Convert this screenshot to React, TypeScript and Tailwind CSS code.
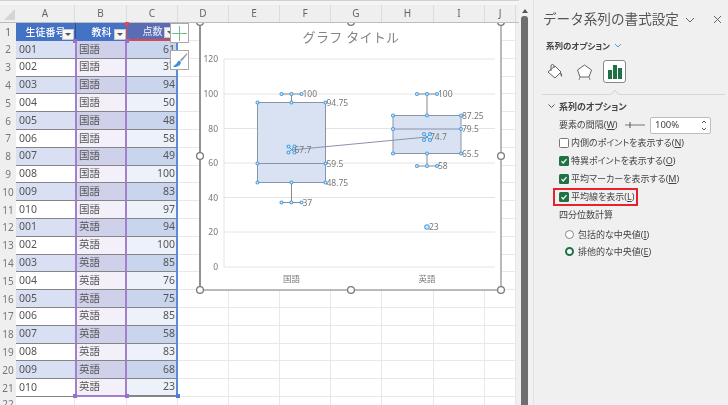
import React from "react";

const FONT = "font-['Noto_Sans','Noto_Sans_CJK_JP',sans-serif]";
const letters = ["A", "B", "C", "D", "E", "F", "G", "H", "I", "J"];
const colWidths = ["w-[59px]", "w-[52px]", "w-[51px]", "w-[51px]", "w-[51px]", "w-[51px]", "w-[51px]", "w-[52px]", "w-[51px]", "w-[31px]"];

const ids = ["001", "002", "003", "004", "005", "006", "007", "008", "009", "010"];
const kokugo = [61, 37, 94, 50, 48, 58, 49, 100, 83, 97];
const eigo = [94, 100, 85, 76, 75, 85, 58, 83, 68, 23];
const rows = [
  ...ids.map((id, i) => ({ id, subject: "国語", score: kokugo[i] })),
  ...ids.map((id, i) => ({ id, subject: "英語", score: eigo[i] })),
];

function FilterButton() {
  return (
    <span className="absolute right-[1px] bottom-[1px] flex h-[11px] w-[12px] items-center justify-center bg-[#f6f6f6] border border-[#c8c8c8]">
      <span className="h-0 w-0 border-x-[3px] border-t-[3px] border-x-transparent border-t-[#555]" />
    </span>
  );
}

function EmptyCells() {
  return (
    <>
      {colWidths.slice(3).map((w, i) => (
        <div key={i} className={`${w} h-full shrink-0 border-r border-b border-[#e8e8e8] bg-white`} />
      ))}
    </>
  );
}

function Sheet() {
  return (
    <div className="h-full w-[519px] shrink-0 overflow-hidden">
      <div className="h-[5px] border-t border-[#d0d0d0] bg-[#f5f5f5]" />
      {/* column letters */}
      <div className="flex h-[18px] bg-[#efefef] border-b border-[#bdbdbd] text-[10px] text-[#666]">
        <div className="relative w-[16px] shrink-0">
          <span className="absolute right-[1px] bottom-[2px] h-0 w-0 border-b-[11px] border-l-[11px] border-b-[#d4d4d4] border-l-transparent" />
        </div>
        {letters.map((l, i) => (
          <div key={l} className={`${colWidths[i]} shrink-0 flex items-center justify-center border-r border-[#dcdcdc]`}>
            {l}
          </div>
        ))}
      </div>
      {/* header row */}
      <div className="flex h-[18px] text-[10px]">
        <div className="w-[16px] shrink-0 flex items-center justify-center bg-[#efefef] text-[#666]">1</div>
        <div className="relative w-[59px] shrink-0 flex items-center justify-center bg-[#4472c4] text-white font-medium overflow-hidden">
          生徒番号
          <FilterButton />
        </div>
        <div className="relative w-[52px] shrink-0 flex items-center justify-center bg-[#4472c4] text-white font-medium border-l border-[#2f4f8f]">
          教科
          <FilterButton />
        </div>
        <div className="relative w-[51px] shrink-0 flex items-center justify-center bg-[#5a6db4] text-[#dfe3f3] font-medium border-b-2 border-x border-[#d8484e]">
          点数
          <FilterButton />
        </div>
        <EmptyCells />
      </div>
      {/* data rows */}
      {rows.map((r, i) => {
        const odd = i % 2 === 0;
        return (
          <div key={i} className="flex h-[17.8px] text-[10.5px] text-[#555]">
            <div className="w-[16px] shrink-0 flex items-center justify-center bg-[#efefef] text-[10px] text-[#777]">{i + 2}</div>
            <div className={`w-[59px] shrink-0 flex items-center pl-[3px] border-b border-[#858585] ${odd ? "bg-[#d9e0f3]" : "bg-white"}`}>{r.id}</div>
            <div className={`w-[52px] shrink-0 flex items-center pl-[2px] border-x-2 border-x-[#a47fcc] border-b border-b-[#858585] ${odd ? "bg-[#cfd0e9]" : "bg-[#f3f0f9]"} ${i === 19 ? "border-b-2 border-b-[#a47fcc]" : ""}`}>{r.subject}</div>
            <div className={`w-[51px] shrink-0 flex items-center justify-end pr-[1px] border-r-2 border-r-[#5b8bdc] border-b border-b-[#858585] ${odd ? "bg-[#c8d5ed]" : "bg-[#edf1fa]"} ${i === 19 ? "border-b-2 border-b-[#5b8bdc]" : ""}`}>{r.score}</div>
            <EmptyCells />
          </div>
        );
      })}
      <div className="flex h-[12px] text-[10px] text-[#777]">
        <div className="w-[16px] shrink-0 flex justify-center bg-[#efefef]">22</div>
        {colWidths.map((w, i) => (
          <div key={i} className={`${w} shrink-0 border-r border-[#e8e8e8] bg-white`} />
        ))}
      </div>
    </div>
  );
}

// small squares at the corners of the selected ranges
function RangeHandles() {
  return (
    <>
      <span className="absolute left-[73px] top-[39px] h-[4px] w-[4px] bg-[#9a6fca]" />
      <span className="absolute left-[125px] top-[39px] h-[4px] w-[4px] bg-[#9a6fca]" />
      <span className="absolute left-[73px] top-[394px] h-[4px] w-[4px] bg-[#9a6fca]" />
      <span className="absolute left-[125px] top-[394px] h-[4px] w-[4px] bg-[#9a6fca]" />
      <span className="absolute left-[176px] top-[394px] h-[4px] w-[4px] bg-[#4a7fd8]" />
      <span className="absolute left-[125px] top-[22px] h-[4px] w-[4px] bg-[#d8484e]" />
    </>
  );
}

function Dot({ x, y, r = 1.5 }: { x: number; y: number; r?: number }) {
  return <circle cx={x} cy={y} r={r} fill="#dbe9f8" stroke="#4aa0e6" strokeWidth="1.1" />;
}

function Handle({ x, y }: { x: number; y: number }) {
  return <circle cx={x} cy={y} r="3.4" fill="white" stroke="#7b7b7b" strokeWidth="1.3" />;
}

function Label({ x, y, children }: { x: number; y: number; children: React.ReactNode }) {
  return (
    <text x={x} y={y + 3} fontSize="8.5" fill="#777">
      {children}
    </text>
  );
}

function Box({ cx, top, mid, bottom, wTop, wBottom, labels }: { cx: number; top: number; mid: number; bottom: number; wTop: number; wBottom: number; labels: string[] }) {
  const l = cx - 34;
  const r = cx + 34;
  return (
    <g>
      <rect x={l} y={top} width={68} height={bottom - top} fill="#d9e2f3" stroke="#8a94a8" strokeWidth="1" />
      <line x1={l} x2={r} y1={mid} y2={mid} stroke="#8a94a8" strokeWidth="1.2" />
      <line x1={cx} x2={cx} y1={wTop} y2={top} stroke="#8a8a8a" />
      <line x1={cx} x2={cx} y1={bottom} y2={wBottom} stroke="#8a8a8a" />
      <line x1={cx - 10} x2={cx + 10} y1={wTop} y2={wTop} stroke="#8a8a8a" />
      <line x1={cx - 10} x2={cx + 10} y1={wBottom} y2={wBottom} stroke="#8a8a8a" />
      {[top, mid, bottom].map((y) => (
        <React.Fragment key={y}>
          <Dot x={l} y={y} />
          <Dot x={r} y={y} />
        </React.Fragment>
      ))}
      <Dot x={cx} y={top} />
      <Dot x={cx} y={bottom} />
      {[wTop, wBottom].map((y) => (
        <React.Fragment key={y}>
          <Dot x={cx - 10} y={y} />
          <Dot x={cx} y={y} />
          <Dot x={cx + 10} y={y} />
        </React.Fragment>
      ))}
      <Label x={cx + 11} y={wTop}>{labels[0]}</Label>
      <Label x={r + 1} y={top}>{labels[1]}</Label>
      <Label x={r + 1} y={mid}>{labels[2]}</Label>
      <Label x={r + 1} y={bottom}>{labels[3]}</Label>
      <Label x={cx + 11} y={wBottom}>{labels[4]}</Label>
    </g>
  );
}

function MeanMark({ x, y, label }: { x: number; y: number; label: string }) {
  return (
    <g>
      <line x1={x - 3} x2={x + 3} y1={y - 3} y2={y + 3} stroke="#4aa0e6" />
      <line x1={x - 3} x2={x + 3} y1={y + 3} y2={y - 3} stroke="#4aa0e6" />
      <Dot x={x - 3} y={y - 3} />
      <Dot x={x + 3} y={y - 3} />
      <Dot x={x - 3} y={y + 3} />
      <Dot x={x + 3} y={y + 3} />
      <Label x={x + 3} y={y}>{label}</Label>
    </g>
  );
}

function Chart() {
  const ticks = [
    { v: 120, y: 59 },
    { v: 100, y: 94 },
    { v: 80, y: 128.5 },
    { v: 60, y: 163 },
    { v: 40, y: 197.5 },
    { v: 20, y: 232 },
    { v: 0, y: 267 },
  ];
  return (
    <svg className="absolute left-[195px] top-[23px] h-[272px] w-[312px]" viewBox="195 23 312 272">
      <rect x="200" y="20" width="301" height="270" fill="white" stroke="#a3a3a3" strokeWidth="1.5" />
      <line x1="200" x2="200" y1="20" y2="290" stroke="#858585" strokeWidth="1.5" />
      <text x="351" y="42" fontSize="13" letterSpacing="0.3" fill="#858585" textAnchor="middle">グラフ タイトル</text>
      {ticks.map((t) => (
        <g key={t.v}>
          <line x1="224" x2="495" y1={t.y} y2={t.y} stroke="#e4e4e4" />
          <text x="218" y={t.y + 3} fontSize="8.5" fill="#777" textAnchor="end">{t.v}</text>
        </g>
      ))}
      <line x1="224" x2="224" y1="59" y2="267" stroke="#e4e4e4" />
      <Box cx={291.5} top={102.5} mid={163.5} bottom={182.5} wTop={94} wBottom={202.5} labels={["100", "94.75", "59.5", "48.75", "37"]} />
      <Box cx={427} top={115.5} mid={129} bottom={153.5} wTop={94} wBottom={166} labels={["100", "87.25", "79.5", "65.5", "58"]} />
      <line x1="291" x2="427" y1="150" y2="137" stroke="#8a94a8" strokeWidth="1" />
      <MeanMark x={291.5} y={149.5} label="67.7" />
      <MeanMark x={427} y={137} label="74.7" />
      <Dot x={427} y={227} r={2.2} />
      <Label x={429} y={227}>23</Label>
      <text x="291.5" y="282" fontSize="8.5" fill="#777" textAnchor="middle">国語</text>
      <text x="427" y="282" fontSize="8.5" fill="#777" textAnchor="middle">英語</text>
      <Handle x={200} y={22} />
      <Handle x={351} y={22} />
      <Handle x={501} y={22} />
      <Handle x={200} y={156} />
      <Handle x={501} y={156} />
      <Handle x={200} y={290} />
      <Handle x={351} y={290} />
      <Handle x={501} y={290} />
    </svg>
  );
}

function ChartButtons() {
  return (
    <div className="absolute left-[170px] top-[23px] flex flex-col gap-[7px]">
      <div className="flex h-[20px] w-[19px] items-center justify-center bg-white border border-[#a8a8a8]">
        <svg width="15" height="15" viewBox="0 0 15 15">
          <path d="M7.500 0v15M0 7.500h15" stroke="#6fbf80" strokeWidth="1" />
        </svg>
      </div>
      <div className="flex h-[20px] w-[19px] items-center justify-center bg-white border border-[#a8a8a8]">
        <svg width="16" height="16" viewBox="0 0 16 16">
          <path d="M15 1 8 8l1.500 1.500L15.500 2z" fill="#9a9a9a" />
          <path d="M7.500 8.500C5 9 5.500 11.500 3.500 12.500 2.500 13.200 1.500 14 1 15c3 .5 7-.5 8-4.500z" fill="#3f8fd8" />
        </svg>
      </div>
    </div>
  );
}

function Scrollbar() {
  return (
    <div className="flex h-full w-[14px] shrink-0 flex-col items-start bg-[#f1f1f1] pl-[2px]">
      <div className="mt-[9px] ml-[1px] h-0 w-0 border-x-[3px] border-b-[4px] border-x-transparent border-b-[#555]" />
      <div className="mt-[3px] h-full w-[7px] rounded-t-[3px] bg-[#6f6f6f]" />
    </div>
  );
}

function Check({ checked, label, boxed }: { checked: boolean; label: React.ReactNode; boxed?: boolean }) {
  return (
    <div className="flex h-[18px] items-center">
      <div className={`flex h-[18px] items-center gap-[2px] ${boxed ? "-ml-[6px] w-[85px] border-2 border-[#e8222c] pl-[4px]" : ""}`}>
        <span className={`flex h-[10px] w-[10px] items-center justify-center rounded-[1.5px] ${checked ? "bg-[#1f7244]" : "border border-[#777] bg-white"}`}>
          {checked && (
            <svg width="8" height="8" viewBox="0 0 8 8">
              <path d="M1.500 4.200 3.200 6 6.500 2.200" fill="none" stroke="white" strokeWidth="1.2" />
            </svg>
          )}
        </span>
        <span className="text-[9px] [font-feature-settings:'palt'] text-[#444]">{label}</span>
      </div>
    </div>
  );
}

function Radio({ on, label }: { on: boolean; label: React.ReactNode }) {
  return (
    <div className="flex h-[17px] items-center gap-[4px] pl-[6px]">
      <span className={`h-[9px] w-[9px] rounded-full ${on ? "border-[2.5px] border-[#1f7244] bg-white" : "border border-[#888] bg-white"}`} />
      <span className="text-[9px] [font-feature-settings:'palt'] text-[#444]">{label}</span>
    </div>
  );
}

function Panel() {
  return (
    <div className="h-full w-[195px] shrink-0 border-l border-[#e2e2e2] bg-[#f0f0f0] text-[#444]">
      <div className="flex h-[29px] items-end pl-[9px] pr-[6px]">
        <span className="text-[13.6px] leading-[20px] text-[#555]">データ系列の書式設定</span>
        <svg className="mb-[5px] ml-[6px]" width="10" height="8" viewBox="0 0 10 8">
          <path d="M1 2l4 4 4-4" fill="none" stroke="#666" />
        </svg>
        <svg className="mb-[5px] ml-auto" width="9" height="9" viewBox="0 0 9 9">
          <path d="M1 1l7 7M8 1 1 8" stroke="#666" />
        </svg>
      </div>
      <div className="mt-[11px] flex h-[12px] items-center gap-[4px] pl-[12px]">
        <span className="text-[8.5px] font-bold [font-feature-settings:'palt'] text-[#444]">系列のオプション</span>
        <svg width="8" height="6" viewBox="0 0 8 6">
          <path d="M1 1l3 3 3-3" fill="none" stroke="#4a9ad8" />
        </svg>
      </div>
      {/* tab icons */}
      <div className="mt-[8px] flex h-[23px] items-center pl-[12px]">
        <svg width="18" height="18" viewBox="0 0 18 18">
          <path d="M9 3 15 9 9 15 2 9z" fill="white" stroke="#666" />
          <path d="M5 8V3a1.500 1.500 0 0 1 3 0v2" fill="none" stroke="#666" />
          <path d="M14 9c2 1 2.500 3 2 5-1-1-2-2-2-5z" fill="#666" />
        </svg>
        <svg className="ml-[12px]" width="17" height="18" viewBox="0 0 17 18">
          <path d="M8.500 2 15.500 7 13 14H4L1.500 7z" fill="white" stroke="#666" />
          <path d="M4 14 3 17M13 14l1 3" stroke="#888" />
        </svg>
        <div className="ml-[10px] flex h-[23px] w-[23px] items-center justify-center rounded-[3px] border border-[#888] bg-white">
          <svg width="16" height="16" viewBox="0 0 16 16">
            <path d="M1 6h4v9H1zM6 1h4v14H6zM11 4h4v11h-4z" fill="#1f7244" />
          </svg>
        </div>
      </div>
      {/* tab pointer line */}
      <div className="relative ml-[8px] mr-[3px] mt-[11px] h-px bg-[#d8d8d8]">
        <span className="absolute left-[70px] -top-[3px] h-[6px] w-[6px] rotate-45 border-l border-t border-[#d8d8d8] bg-[#f0f0f0]" />
      </div>
      <div className="mt-[5px] flex h-[13px] items-center gap-[4px] pl-[14px]">
        <svg width="7" height="5" viewBox="0 0 7 5">
          <path d="M.5.5l3 3 3-3" fill="none" stroke="#555" />
        </svg>
        <span className="text-[9px] font-bold [font-feature-settings:'palt'] text-[#444]">系列のオプション</span>
      </div>
      <div className="pl-[25px]">
        <div className="mt-[3px] flex h-[18px] items-center">
          <span className="w-[66px] text-[9px] [font-feature-settings:'palt']">要素の間隔(<u>W</u>)</span>
          <svg width="20" height="8" viewBox="0 0 20 8">
            <path d="M0 4h20" stroke="#777" />
            <path d="M5 1v6" stroke="#555" />
          </svg>
          <div className="ml-[5px] flex h-[17px] w-[61px] items-center justify-between rounded-[2px] border border-[#bdbdbd] bg-white pl-[4px] pr-[3px] text-[9.5px]">
            100%
            <svg width="6" height="11" viewBox="0 0 6 11">
              <path d="M1 3l2-2 2 2M1 8l2 2 2-2" fill="none" stroke="#555" />
            </svg>
          </div>
        </div>
        <Check checked={false} label={<>内側のポイントを表示する(<u>N</u>)</>} />
        <Check checked label={<>特異ポイントを表示する(<u>O</u>)</>} />
        <Check checked label={<>平均マーカーを表示する(<u>M</u>)</>} />
        <Check checked boxed label={<>平均線を表示(<u>L</u>)</>} />
        <div className="flex h-[18px] items-center text-[9px] [font-feature-settings:'palt']">四分位数計算</div>
        <div className="mt-[2px]">
          <Radio on={false} label={<>包括的な中央値(<u>I</u>)</>} />
          <Radio on label={<>排他的な中央値(<u>E</u>)</>} />
        </div>
      </div>
    </div>
  );
}

export default function App() {
  return (
    <div className={`relative flex h-[405px] w-[728px] overflow-hidden bg-[#f0f0f0] blur-[0.35px] ${FONT}`}>
      <Sheet />
      <RangeHandles />
      <Chart />
      <ChartButtons />
      <Scrollbar />
      <Panel />
    </div>
  );
}
